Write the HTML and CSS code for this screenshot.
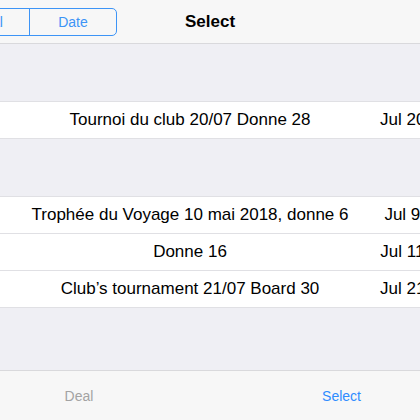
FILE: index.html
```html
<!DOCTYPE html>
<html lang="fr">
<head>
    <meta charset="UTF-8">
    <title>Select</title>
    <link rel="stylesheet" href="styles.css">
</head>
<body>
    <div class="screen">
        <header class="navbar">
            <div class="segmented">
                <span class="seg">Deal</span>
                <span class="seg">Date</span>
            </div>
            <h1 class="title">Select</h1>
        </header>

        <main class="content">
            <div class="group first">
                <div class="row">
                    <span class="name">Tournoi du club 20/07 Donne 28</span>
                    <span class="date">Jul 20, 2018</span>
                </div>
            </div>

            <div class="group">
                <div class="row">
                    <span class="name">Trophée du Voyage 10 mai 2018, donne 6</span>
                    <span class="date">Jul 9, 2018</span>
                </div>
                <div class="row">
                    <span class="name">Donne 16</span>
                    <span class="date">Jul 11, 2018</span>
                </div>
                <div class="row">
                    <span class="name">Club’s tournament 21/07 Board 30</span>
                    <span class="date">Jul 21, 2018</span>
                </div>
            </div>
        </main>

        <footer class="toolbar">
            <span class="tool disabled">Deal</span>
            <span class="tool active">Select</span>
        </footer>
    </div>
</body>
</html>
```

FILE: styles.css
```css
body {
    margin: 0;
    font-family: "Liberation Sans", Arial, sans-serif;
    background-color: #efeff4;
    overflow: hidden;
}
.screen {
    width: 420px;
    height: 420px;
    display: flex;
    flex-direction: column;
    overflow: hidden;
}
.navbar {
    height: 43px;
    flex-shrink: 0;
    background-color: #f7f7f7;
    border-bottom: 1px solid #d9d9dc;
    display: flex;
    align-items: center;
    position: relative;
}
.segmented {
    display: flex;
    margin-left: -58px;
    height: 28px;
    border: 1px solid #3d94f6;
    border-radius: 5px;
    box-sizing: border-box;
}
.seg {
    width: 86px;
    display: flex;
    align-items: center;
    justify-content: center;
    color: #3d94f6;
    font-size: 14px;
}
.seg:first-child {
    box-sizing: border-box;
    padding-left: 5px;
}
.seg + .seg {
    border-left: 1px solid #3d94f6;
}
.title {
    position: absolute;
    left: 0;
    right: 0;
    top: 0;
    margin: 0;
    line-height: 43px;
    text-align: center;
    font-size: 17px;
    font-weight: bold;
    color: #000;
}
.content {
    flex: 1;
}
.group {
    margin-top: 57px;
    background-color: #fff;
    border-top: 1px solid #e0e0e4;
}
.row {
    height: 36px;
    display: flex;
    align-items: center;
    border-bottom: 1px solid #e0e0e4;
    font-size: 17px;
    color: #000;
    white-space: nowrap;
}
.name {
    width: 380px;
    flex-shrink: 0;
    text-align: center;
}
.date {
    width: 92px;
    flex-shrink: 0;
    text-align: center;
}
.toolbar {
    height: 49px;
    flex-shrink: 0;
    background-color: #f7f7f7;
    border-top: 1px solid #d9d9dc;
    display: flex;
    align-items: center;
    font-size: 14px;
}
.tool {
    flex: 1;
    text-align: center;
}
.tool.disabled {
    flex: 0 0 158px;
    color: #a3a3a3;
}
.tool.active {
    color: #2f8cff;
    text-align: right;
    padding-right: 59px;
}
```
